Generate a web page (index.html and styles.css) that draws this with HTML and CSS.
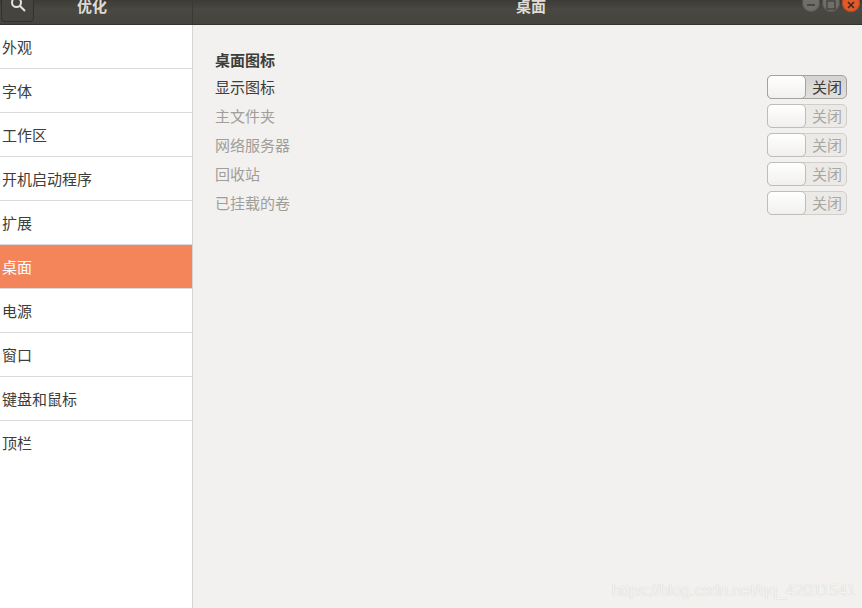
FILE: index.html
```html
<!DOCTYPE html>
<html lang="zh-CN">
<head>
    <meta charset="UTF-8">
    <title>优化</title>
    <link rel="stylesheet" href="styles.css">
</head>
<body>
    <header class="titlebar">
        <div class="titlebar-left">
            <button class="search-btn">
                <svg width="16" height="16" viewBox="0 0 16 16" fill="none" stroke="#e6e4df" stroke-width="2">
                    <circle cx="6.5" cy="6.5" r="4.5"/>
                    <path d="M10 10l5 5"/>
                </svg>
            </button>
            <span class="app-title">优化</span>
        </div>
        <div class="titlebar-main">
            <span class="page-title">桌面</span>
            <div class="win-btns">
                <span class="win-btn">
                    <svg width="10" height="10" viewBox="0 0 10 10" fill="none" stroke="#3c3b37" stroke-width="1.5"><path d="M1 5h8"/></svg>
                </span>
                <span class="win-btn">
                    <svg width="10" height="10" viewBox="0 0 10 10" fill="none" stroke="#3c3b37" stroke-width="1.2"><rect x="1" y="1" width="8" height="8"/></svg>
                </span>
                <span class="win-btn close">
                    <svg width="10" height="10" viewBox="0 0 10 10" fill="none" stroke="#3c2a20" stroke-width="1.5"><path d="M2 2l6 6M8 2l-6 6"/></svg>
                </span>
            </div>
        </div>
    </header>
    <div class="content">
        <nav class="sidebar">
            <div class="nav-item">外观</div>
            <div class="nav-item">字体</div>
            <div class="nav-item">工作区</div>
            <div class="nav-item">开机启动程序</div>
            <div class="nav-item">扩展</div>
            <div class="nav-item active">桌面</div>
            <div class="nav-item">电源</div>
            <div class="nav-item">窗口</div>
            <div class="nav-item">键盘和鼠标</div>
            <div class="nav-item last">顶栏</div>
        </nav>
        <main class="panel">
            <h2 class="section-title">桌面图标</h2>
            <div class="row">
                <span class="row-label">显示图标</span>
                <div class="switch"><span class="knob"></span><span class="switch-label">关闭</span></div>
            </div>
            <div class="row disabled">
                <span class="row-label">主文件夹</span>
                <div class="switch"><span class="knob"></span><span class="switch-label">关闭</span></div>
            </div>
            <div class="row disabled">
                <span class="row-label">网络服务器</span>
                <div class="switch"><span class="knob"></span><span class="switch-label">关闭</span></div>
            </div>
            <div class="row disabled">
                <span class="row-label">回收站</span>
                <div class="switch"><span class="knob"></span><span class="switch-label">关闭</span></div>
            </div>
            <div class="row disabled">
                <span class="row-label">已挂载的卷</span>
                <div class="switch"><span class="knob"></span><span class="switch-label">关闭</span></div>
            </div>
            <div class="watermark">https://blog.csdn.net/qq_42011541</div>
        </main>
    </div>
</body>
</html>
```
FILE: styles.css
```css
html, body {
    height: 100%;
}
body {
    margin: 0;
    display: flex;
    flex-direction: column;
    overflow: hidden;
    font-family: "Noto Sans CJK SC", "Noto Sans", sans-serif;
    font-size: 15px;
    color: #3d3d3a;
    background-color: #f2f1ef;
}
.titlebar {
    display: flex;
    flex: none;
    height: 25px;
    overflow: hidden;
    color: #dfdbd2;
    background: linear-gradient(#3c3b37, #4a4842 40%, #45433d);
    border-bottom: 1px solid #35332e;
    box-sizing: border-box;
}
.titlebar-left {
    display: flex;
    width: 193px;
    flex: none;
    align-items: center;
    box-sizing: border-box;
    border-right: 1px solid #3a3934;
}
.search-btn {
    display: flex;
    align-items: center;
    justify-content: center;
    width: 33px;
    height: 31px;
    margin: -11px 0 0 1px;
    padding: 0 0 6px;
    border: 1px solid #32312d;
    border-radius: 4px;
    background: #46443e;
}
.app-title {
    margin: -14px 0 0 43px;
    font-size: 15px;
    font-weight: 700;
}
.titlebar-main {
    display: flex;
    flex: 1;
    align-items: center;
    justify-content: center;
}
.page-title {
    margin: -13px 0 0 7px;
    font-weight: 700;
    line-height: 20px;
}
.win-btns {
    position: absolute;
    top: -6px;
    right: 2px;
    display: flex;
    gap: 2px;
}
.win-btn {
    display: flex;
    align-items: center;
    justify-content: center;
    width: 18px;
    height: 18px;
    border-radius: 50%;
    background: #6f6e67;
    box-shadow: inset 0 0 0 1px #55534c;
}
.win-btn svg {
    margin-top: 4px;
}
.win-btn.close {
    background: #e2592a;
    box-shadow: inset 0 0 0 1px #b8481f;
}
.content {
    display: flex;
    flex: 1;
    min-height: 0;
}
.sidebar {
    width: 192px;
    flex: none;
    background-color: #fff;
    border-right: 1px solid #d8d6d3;
}
.nav-item {
    height: 43px;
    padding-left: 2px;
    line-height: 43px;
    color: #3d3d3a;
    border-bottom: 1px solid #dcdad7;
}
.nav-item.active {
    color: #fff;
    background-color: #f4855a;
}
.nav-item.last {
    border-bottom: none;
}
.panel {
    position: relative;
    flex: 1;
    padding: 24px 15px 0 22px;
}
.section-title {
    margin: 0 0 5px;
    font-size: 15px;
    font-weight: 700;
    line-height: 21px;
    color: #3d3d3a;
}
.row {
    display: flex;
    align-items: center;
    justify-content: space-between;
    height: 24px;
    margin-bottom: 5px;
}
.row-label {
    padding-bottom: 2px;
}
.row.disabled {
    color: #a09e9a;
}
.switch {
    display: flex;
    width: 80px;
    height: 24px;
    box-sizing: border-box;
    border: 1px solid #a5a39f;
    border-radius: 5px;
    background: linear-gradient(#d5d3cf, #e2e0dd);
}
.knob {
    width: 37px;
    margin: -1px 0 -1px -1px;
    border: 1px solid #a5a39f;
    border-radius: 5px;
    background: linear-gradient(#fff, #f1f0ee);
}
.switch-label {
    margin-left: 6px;
    font-size: 15px;
    line-height: 22px;
    color: #3d3d3a;
}
.row.disabled .switch {
    border-color: #d0cecb;
    background: #ebeae7;
}
.row.disabled .knob {
    border-color: #bfbdba;
}
.row.disabled .switch-label {
    color: #a9a7a3;
}
.watermark {
    position: absolute;
    right: 6px;
    bottom: 8px;
    font-family: "Liberation Sans", sans-serif;
    font-size: 16px;
    color: #f4f3f1;
    text-shadow: 0 0 1px #c9c7c4;
}
```
